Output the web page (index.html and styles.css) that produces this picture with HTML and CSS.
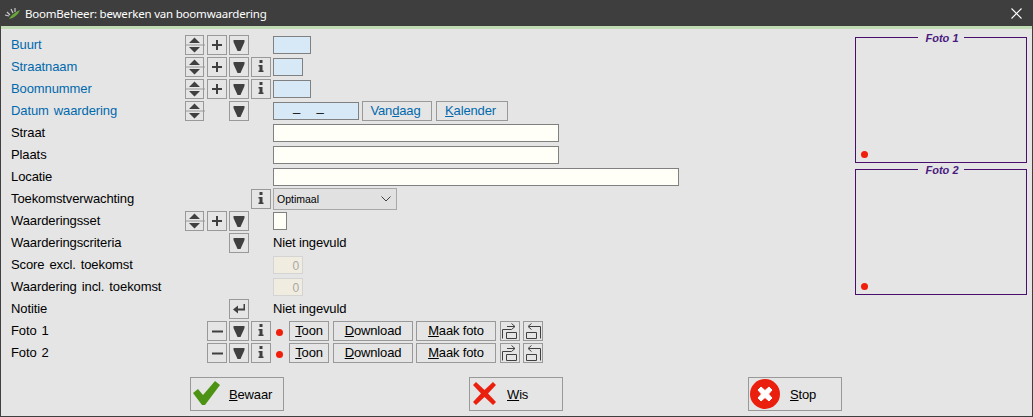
FILE: index.html
```html
<!DOCTYPE html>
<html lang="nl">
<head>
<meta charset="utf-8">
<title>BoomBeheer</title>
<link rel="stylesheet" href="styles.css">
</head>
<body>
<svg class="defs" width="0" height="0" aria-hidden="true">
  <symbol id="i-updown" viewBox="0 0 20 20"><path d="M4 8h11L9.500 2.500zM4 12h11L9.500 17.500z" fill="#404040"/><path d="M0 10h20" stroke="#999" stroke-width="1"/></symbol>
  <symbol id="i-plus" viewBox="0 0 20 20"><path d="M9 5h2v4h4v2h-4v4H9v-4H5V9h4z" fill="#404040"/></symbol>
  <symbol id="i-minus" viewBox="0 0 20 20"><path d="M5 9.500h11v2H5z" fill="#404040"/></symbol>
  <symbol id="i-down" viewBox="0 0 20 20"><path d="M4.500 5h11v2l-4 9h-3l-4-9z" fill="#404040"/></symbol>
  <symbol id="i-info" viewBox="0 0 20 20"><path d="M8.500 3h3v3h-3zM8.500 8h3v5.500h1V15h-5v-1.500h1V9.500h-1V8z" fill="#404040"/></symbol>
  <symbol id="i-enter" viewBox="0 0 20 20"><path d="M14.500 5H16v6.500H9v3l-5-4 5-4v3h5.500z" fill="#404040"/></symbol>
  <symbol id="i-out" viewBox="0 0 20 20" fill="none" stroke="#404040"><path d="M2.500 17.500v-9h9M6.500 11.500h10v6h-10zM11.500 2.500l3.500 3-3.500 3M15 5.500H7"/></symbol>
  <symbol id="i-in" viewBox="0 0 20 20" fill="none" stroke="#404040"><path d="M17.500 17.500v-12H6M3.500 11.500h10v6h-10zM8.500 2.500L5 5.500l3.500 3"/></symbol>
</svg>

<div class="window">
  <header class="titlebar">
    <svg class="logo" width="18" height="16" viewBox="0 0 18 16"><path d="M5 14C8 9 12 7 16 5c-2 5-6 8-11 9z" fill="#6aa53a"/><path d="M3 7l3 3M7 4l2 4M11 3v4M1 10l4 1" stroke="#c9c9c9" stroke-width="1.200"/></svg>
    <span class="title">BoomBeheer: bewerken van boomwaardering</span>
    <svg class="close" width="11" height="11" viewBox="0 0 11 11"><path d="M.5.500l10 10M10.500.500l-10 10" stroke="#fff" stroke-width="1.100"/></svg>
  </header>
  <div class="accent"></div>

  <main class="content">
    <section class="form">
      <div class="row">
        <label class="lbl key">Buurt</label>
        <div class="tools">
          <span class="ib ud"><svg><use href="#i-updown"/></svg></span><span class="ib"><svg><use href="#i-plus"/></svg></span><span class="ib"><svg><use href="#i-down"/></svg></span><span class="slot"></span>
        </div>
        <input class="inp key-inp w38">
      </div>
      <div class="row">
        <label class="lbl key">Straatnaam</label>
        <div class="tools">
          <span class="ib ud"><svg><use href="#i-updown"/></svg></span><span class="ib"><svg><use href="#i-plus"/></svg></span><span class="ib"><svg><use href="#i-down"/></svg></span><span class="ib"><svg><use href="#i-info"/></svg></span>
        </div>
        <input class="inp key-inp w30">
      </div>
      <div class="row">
        <label class="lbl key">Boomnummer</label>
        <div class="tools">
          <span class="ib ud"><svg><use href="#i-updown"/></svg></span><span class="ib"><svg><use href="#i-plus"/></svg></span><span class="ib"><svg><use href="#i-down"/></svg></span><span class="ib"><svg><use href="#i-info"/></svg></span>
        </div>
        <input class="inp key-inp w38">
      </div>
      <div class="row">
        <label class="lbl key">Datum waardering</label>
        <div class="tools">
          <span class="ib ud"><svg><use href="#i-updown"/></svg></span><span class="slot"></span><span class="ib"><svg><use href="#i-down"/></svg></span><span class="slot"></span>
        </div>
        <div class="inp key-inp w86 date"><span>_</span><span>_</span></div>
        <button class="tb key-btn w70 gap-s">Van<u>d</u>aag</button>
        <button class="tb key-btn w72"><u>K</u>alender</button>
      </div>
      <div class="row">
        <label class="lbl">Straat</label>
        <div class="tools"></div>
        <input class="inp w286">
      </div>
      <div class="row">
        <label class="lbl">Plaats</label>
        <div class="tools"></div>
        <input class="inp w286">
      </div>
      <div class="row">
        <label class="lbl">Locatie</label>
        <div class="tools"></div>
        <input class="inp w406">
      </div>
      <div class="row">
        <label class="lbl">Toekomstverwachting</label>
        <div class="tools">
          <span class="slot"></span><span class="slot"></span><span class="slot"></span><span class="ib"><svg><use href="#i-info"/></svg></span>
        </div>
        <div class="select"><span>Optimaal</span><svg width="10" height="6" viewBox="0 0 10 6"><path d="M.5.500L5 5 9.500.500" fill="none" stroke="#404040"/></svg></div>
      </div>
      <div class="row">
        <label class="lbl">Waarderingsset</label>
        <div class="tools">
          <span class="ib ud"><svg><use href="#i-updown"/></svg></span><span class="ib"><svg><use href="#i-plus"/></svg></span><span class="ib"><svg><use href="#i-down"/></svg></span><span class="slot"></span>
        </div>
        <input class="inp w14">
      </div>
      <div class="row">
        <label class="lbl">Waarderingscriteria</label>
        <div class="tools">
          <span class="slot"></span><span class="slot"></span><span class="ib"><svg><use href="#i-down"/></svg></span><span class="slot"></span>
        </div>
        <span class="val">Niet ingevuld</span>
      </div>
      <div class="row">
        <label class="lbl">Score excl. toekomst</label>
        <div class="tools"></div>
        <div class="num">0</div>
      </div>
      <div class="row">
        <label class="lbl">Waardering incl. toekomst</label>
        <div class="tools"></div>
        <div class="num">0</div>
      </div>
      <div class="row">
        <label class="lbl">Notitie</label>
        <div class="tools">
          <span class="slot"></span><span class="slot"></span><span class="ib"><svg><use href="#i-enter"/></svg></span><span class="slot"></span>
        </div>
        <span class="val">Niet ingevuld</span>
      </div>
      <div class="row">
        <label class="lbl">Foto 1</label>
        <div class="tools">
          <span class="slot"></span><span class="ib"><svg><use href="#i-minus"/></svg></span><span class="ib"><svg><use href="#i-down"/></svg></span><span class="ib"><svg><use href="#i-info"/></svg></span>
        </div>
        <span class="dot"></span>
        <button class="tb w40"><u>T</u>oon</button>
        <button class="tb w80"><u>D</u>ownload</button>
        <button class="tb w80 gap-s"><u>M</u>aak foto</button>
        <span class="ib gap-m"><svg><use href="#i-out"/></svg></span><span class="ib gap-l"><svg><use href="#i-in"/></svg></span>
      </div>
      <div class="row">
        <label class="lbl">Foto 2</label>
        <div class="tools">
          <span class="slot"></span><span class="ib"><svg><use href="#i-minus"/></svg></span><span class="ib"><svg><use href="#i-down"/></svg></span><span class="ib"><svg><use href="#i-info"/></svg></span>
        </div>
        <span class="dot"></span>
        <button class="tb w40"><u>T</u>oon</button>
        <button class="tb w80"><u>D</u>ownload</button>
        <button class="tb w80 gap-s"><u>M</u>aak foto</button>
        <span class="ib gap-m"><svg><use href="#i-out"/></svg></span><span class="ib gap-l"><svg><use href="#i-in"/></svg></span>
      </div>
    </section>

    <aside class="photos">
      <div class="photo"><span class="photo-title">Foto 1</span><span class="photo-dot"></span></div>
      <div class="photo"><span class="photo-title">Foto 2</span><span class="photo-dot"></span></div>
    </aside>
  </main>

  <footer class="actions">
    <button class="big">
      <svg class="ic-check" width="27" height="24" viewBox="0 0 27 24"><path d="M0 12l5-4 5 6L22 0l5 4-15 20H9z" fill="#4c9313"/></svg>
      <span class="t-bewaar"><u>B</u>ewaar</span>
    </button>
    <button class="big">
      <svg class="ic-cross" width="23" height="23" viewBox="0 0 23 23"><path d="M3 0l8.500 8L20 0l3 3-8 8.500 8 8.500-3 3-8.500-8L3 23l-3-3 8-8.500L0 3z" fill="#ea1f0d"/></svg>
      <span class="t-wis"><u>W</u>is</span>
    </button>
    <button class="big">
      <svg class="ic-stop" width="30" height="30" viewBox="0 0 30 30"><circle cx="15" cy="15" r="15" fill="#ea1f0d"/><path d="M11 8l4 3.500L19 8l3 3-3.500 4 3.500 4-3 3-4-3.500-4 3.500-3-3 3.500-4L8 11z" fill="#fff" stroke="#fff" stroke-linejoin="round"/></svg>
      <span class="t-stop"><u>S</u>top</span>
    </button>
  </footer>
</div>
</body>
</html>
```

FILE: styles.css
```css
* { box-sizing: border-box; }
html, body { margin: 0; padding: 0; }
body { font: 13px "Liberation Sans", Arial, sans-serif; letter-spacing: -0.15px; color: #000; background: #e5e5e5; }
.defs { position: absolute; }

.window {
  width: 1033px;
  height: 417px;
  display: flex;
  flex-direction: column;
  background: #e5e5e5;
  border: 1px solid #404040;
  border-top: 0;
}
.titlebar {
  height: 26px;
  margin: 0 -1px;
  padding: 0 11px 0 4px;
  display: flex;
  align-items: center;
  background: #3e3e3e;
  color: #fff;
}
.logo { flex: none; }
.title { margin-left: 3px; font: 11.5px "Noto Sans", sans-serif; letter-spacing: -0.2px; }
.close { margin-left: auto; }
.accent { height: 3px; background: #c1dcb5; flex: none; }

.content { display: flex; padding-top: 5px; height: 335px; flex: none; }
.form { flex: none; width: 854px; padding-left: 10px; }
.row { height: 22px; display: flex; align-items: center; }
.lbl { width: 174px; flex: none; padding-bottom: 2px; letter-spacing: -0.1px; word-spacing: 1.500px; }
.val { padding-bottom: 2px; }
.key { color: #0069ad; }
.tools { width: 88px; flex: none; display: flex; gap: 2px; }
.slot { width: 20px; height: 20px; flex: none; }
.ib {
  width: 20px;
  height: 20px;
  flex: none;
  display: block;
  border: 1px solid #999;
  position: relative;
}
.ib.ud { width: 19px; margin-right: 1px; }
.ib svg { position: absolute; left: -1px; top: -1px; width: 20px; height: 20px; display: block; }

.inp {
  height: 18px;
  flex: none;
  margin: 0;
  padding: 0;
  border: 1px solid #808080;
  background: #fffff8;
  font: inherit;
  outline: 0;
}
.key-inp { background: #d7e8f6; }
.w14 { width: 14px; }
.w30 { width: 30px; }
.w38 { width: 38px; }
.w86 { width: 86px; }
.w286 { width: 286px; }
.w406 { width: 406px; }
.w40 { width: 40px; }
.w70 { width: 70px; }
.w72 { width: 72px; }
.w80 { width: 80px; }
.date { display: flex; gap: 16.500px; padding-left: 19px; line-height: 7px; }

.tb {
  height: 20px;
  flex: none;
  margin: 0 0 0 4px;
  padding: 0 0 2px;
  border: 1px solid #999;
  background: transparent;
  font: 13px "Liberation Sans", Arial, sans-serif;
  letter-spacing: -0.15px;
  color: #000;
}
.key-btn { color: #0069ad; padding-right: 3px; }
.tb.gap-s { margin-left: 3px; }
.gap-m { margin-left: 4px; }
.gap-l { margin-left: 3px; }
.select {
  width: 124px;
  height: 22px;
  flex: none;
  padding: 0 5px 0 3px;
  display: flex;
  align-items: center;
  justify-content: space-between;
  border: 1px solid #a8a8a8;
  background: #e1e1e1;
  font-size: 10.500px;
  letter-spacing: 0;
}
.num {
  width: 30px;
  height: 18px;
  flex: none;
  padding-right: 3px;
  border: 1px solid #d4d4d4;
  background: #f0ece0;
  color: #a8a8a8;
  text-align: right;
  font-size: 12px;
  line-height: 18px;
}
.dot {
  width: 7px;
  height: 7px;
  margin: 2px 2px 0 3px;
  flex: none;
  border-radius: 50%;
  background: #f01e0a;
}

.photos { display: flex; flex-direction: column; gap: 6px; padding-top: 3px; }
.photo {
  position: relative;
  width: 172px;
  height: 126px;
  border: 1px solid #4a0f6e;
}
.photo-title {
  position: absolute;
  top: -6px;
  left: 62px;
  width: 46px;
  padding-left: 2px;
  background: #e5e5e5;
  text-align: center;
  color: #4a1a80;
  font: italic bold 11px/13px "Liberation Sans", Arial, sans-serif;
  letter-spacing: 0;
}
.photo-dot {
  position: absolute;
  left: 5px;
  bottom: 4px;
  width: 7px;
  height: 7px;
  border-radius: 50%;
  background: #f01e0a;
}

.actions { display: flex; gap: 185px; padding: 13px 0 0 189px; }
.big {
  width: 94px;
  height: 34px;
  flex: none;
  display: flex;
  align-items: center;
  padding: 0;
  border: 1px solid #999;
  background: transparent;
  font: 13px "Liberation Sans", Arial, sans-serif;
  letter-spacing: -0.15px;
  color: #000;
  position: relative;
}
.big svg { position: absolute; }
.ic-check { left: 2px; top: 3px; }
.ic-cross { left: 3px; top: 4px; }
.ic-stop { left: 1px; top: 1px; }
.t-bewaar { margin-left: 38px; }
.t-wis { margin-left: 37px; }
.t-stop { margin-left: 41px; }
```
